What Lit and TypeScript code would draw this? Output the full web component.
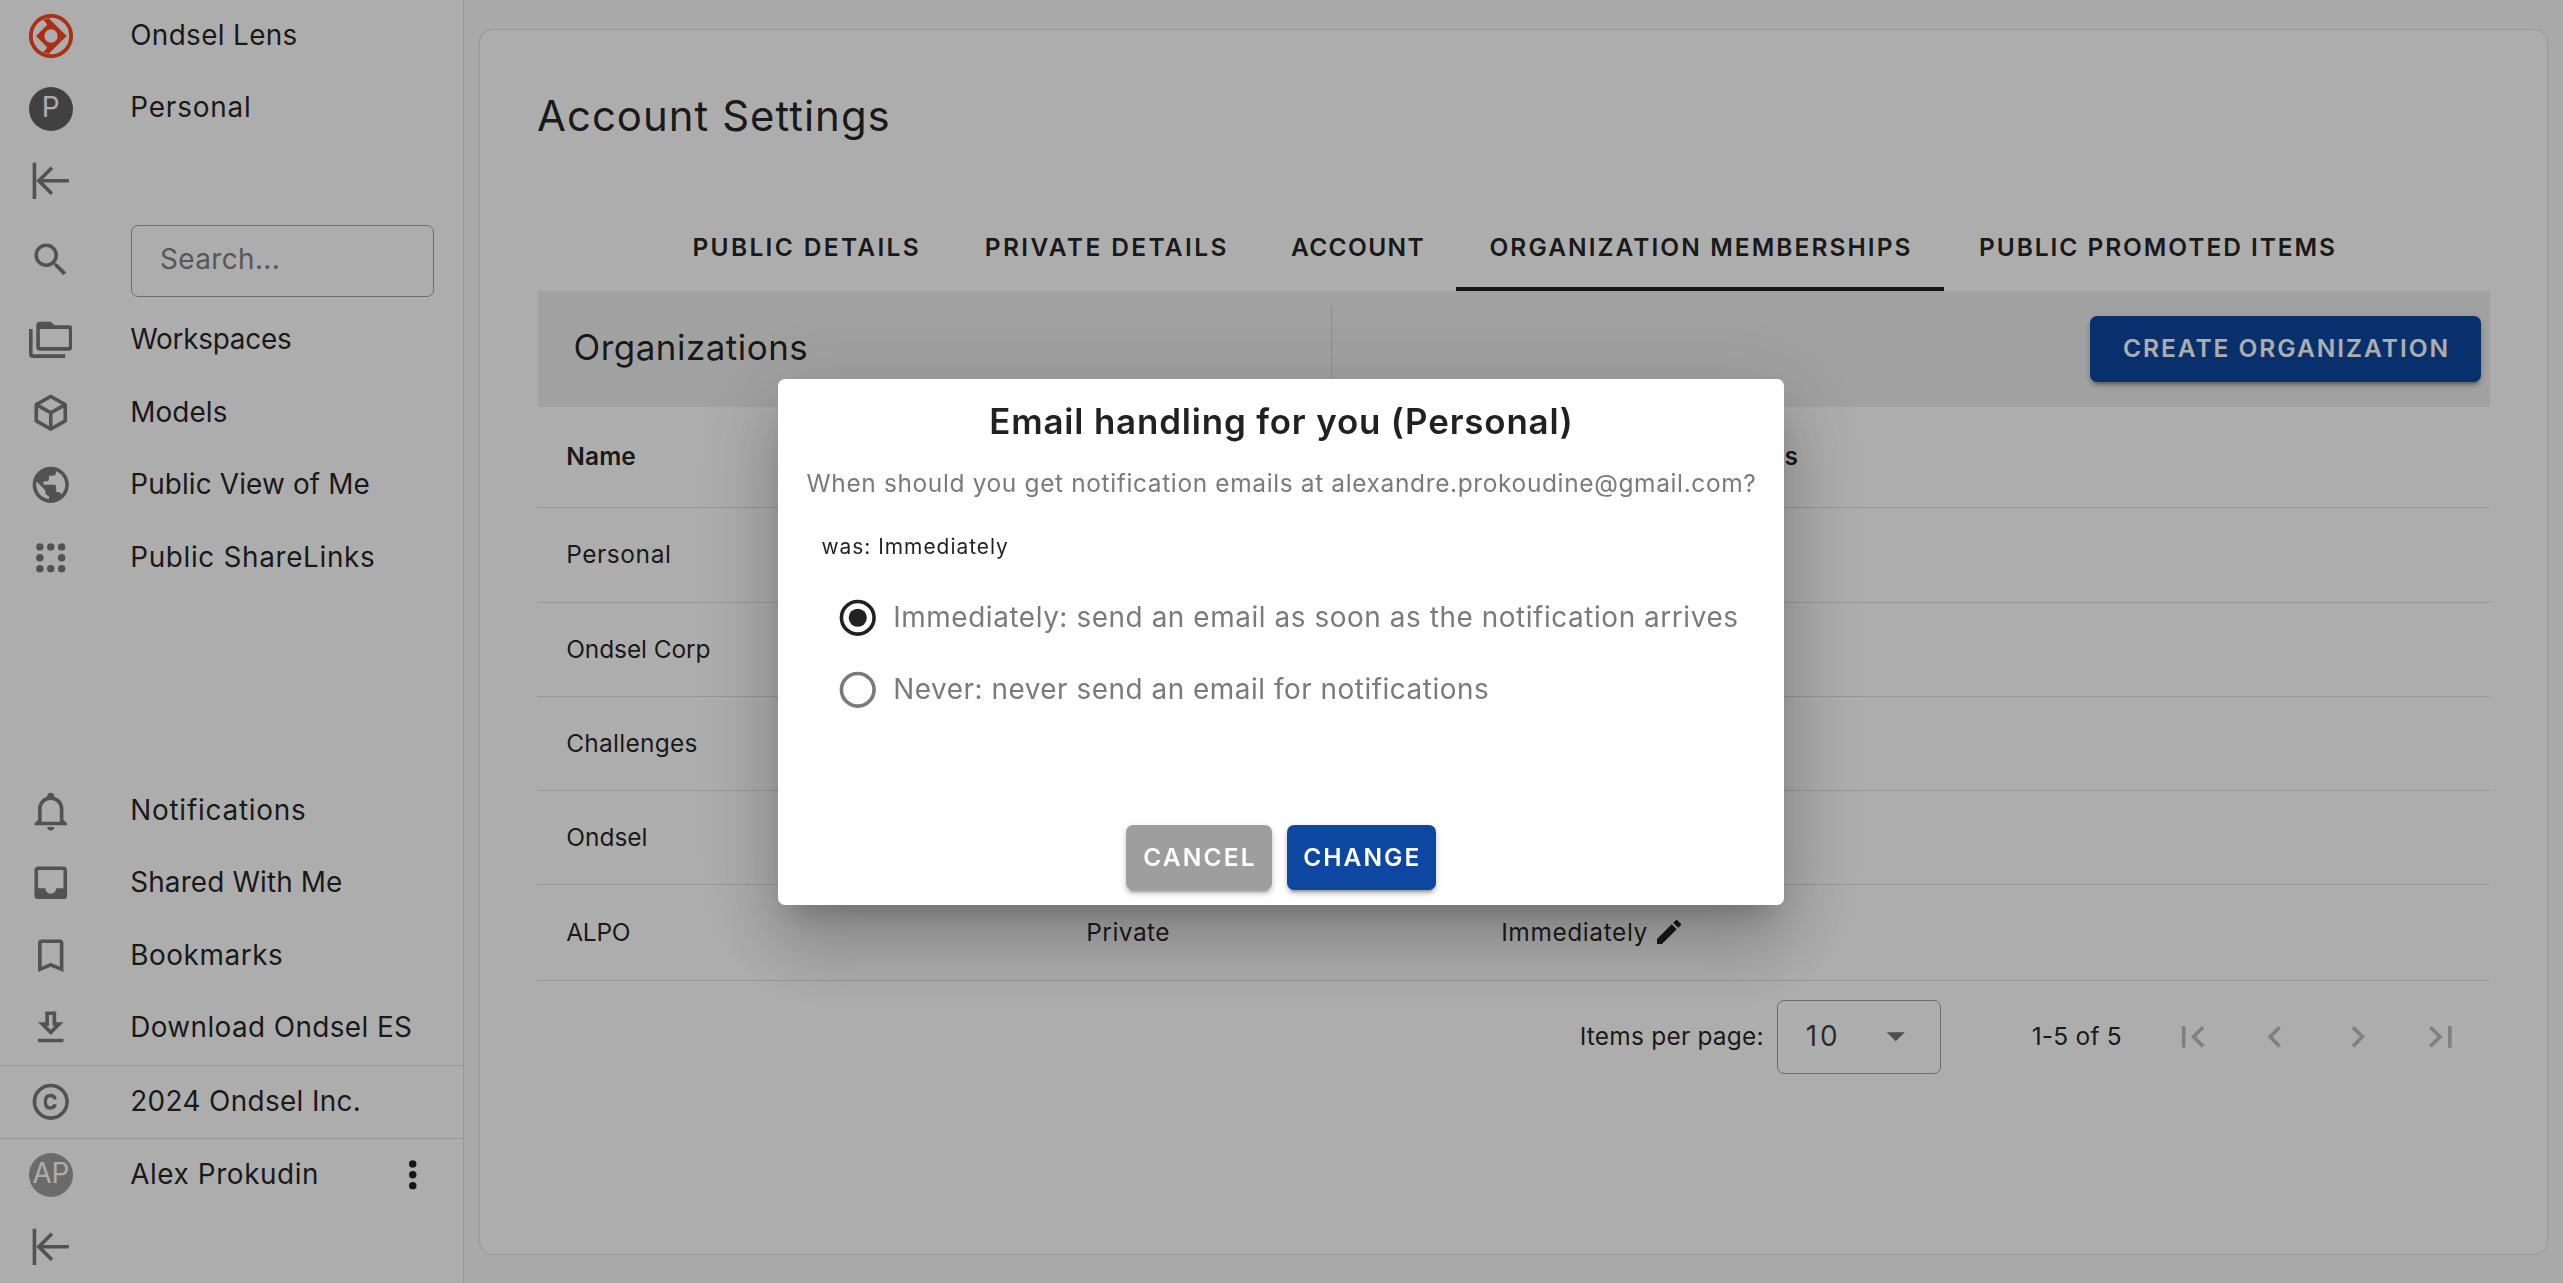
import { LitElement, html, css, svg, nothing } from "lit";
import { classMap } from "lit/directives/class-map.js";

const ICONS: Record<string, unknown> = {
  collapse: svg`<path d="M11.92,19.92L4,12L11.92,4.08L13.33,5.5L7.83,11H22V13H7.83L13.34,18.5L11.92,19.92M4,12V2H2V22H4V12Z"/>`,
  search: svg`<path d="M9.5,3A6.5,6.5 0 0,1 16,9.5C16,11.11 15.41,12.59 14.44,13.73L14.71,14H15.5L20.5,19L19,20.5L14,15.5V14.71L13.73,14.44C12.59,15.41 11.11,16 9.5,16A6.5,6.5 0 0,1 3,9.5A6.5,6.5 0 0,1 9.5,3M9.5,5C7,5 5,7 5,9.5C5,12 7,14 9.5,14C12,14 14,12 14,9.5C14,7 12,5 9.5,5Z"/>`,
  folders: svg`<path d="M22,4A2,2 0 0,1 24,6V16A2,2 0 0,1 22,18H6A2,2 0 0,1 4,16V4A2,2 0 0,1 6,2H12L14,4H22M2,6V20H20V22H2A2,2 0 0,1 0,20V6H2M6,6V16H22V6H6Z"/>`,
  cube: svg`<path d="M21,16.5C21,16.88 20.79,17.21 20.47,17.38L12.57,21.82C12.41,21.94 12.21,22 12,22C11.79,22 11.59,21.94 11.43,21.82L3.53,17.38C3.21,17.21 3,16.88 3,16.5V7.5C3,7.12 3.21,6.79 3.53,6.62L11.43,2.18C11.59,2.06 11.79,2 12,2C12.21,2 12.41,2.06 12.57,2.18L20.47,6.62C20.79,6.79 21,7.12 21,7.5V16.5M12,4.15L6.04,7.5L12,10.85L17.96,7.5L12,4.15M5,15.91L11,19.29V12.58L5,9.21V15.91M19,15.91V9.21L13,12.58V19.29L19,15.91Z"/>`,
  earth: svg`<path d="M17.9,17.39C17.64,16.59 16.89,16 16,16H15V13A1,1 0 0,0 14,12H8V10H10A1,1 0 0,0 11,9V7H13A2,2 0 0,0 15,5V4.59C17.93,5.77 20,8.64 20,12C20,14.08 19.2,15.97 17.9,17.39M11,19.93C7.05,19.44 4,16.08 4,12C4,11.38 4.08,10.78 4.21,10.21L9,15V16A2,2 0 0,0 11,18M12,2A10,10 0 0,0 2,12A10,10 0 0,0 12,22A10,10 0 0,0 22,12A10,10 0 0,0 12,2Z"/>`,
  dotsSquare: [[6, 6], [12, 6], [18, 6], [6, 12], [18, 12], [6, 18], [12, 18], [18, 18]].map(
    ([x, y]) => svg`<circle cx=${x} cy=${y} r="2.05"/>`,
  ),
  bell: svg`<path d="M10 21H14C14 22.1 13.1 23 12 23S10 22.1 10 21M21 19V20H3V19L5 17V11C5 7.9 7 5.2 10 4.3V4C10 2.9 10.9 2 12 2S14 2.9 14 4V4.3C17 5.2 19 7.9 19 11V17L21 19M17 11C17 8.2 14.8 6 12 6S7 8.2 7 11V18H17V11Z"/>`,
  inbox: svg`<path d="M19,3H5C3.9,3 3,3.9 3,5V19A2,2 0 0,0 5,21H19A2,2 0 0,0 21,19V5C21,3.9 20.1,3 19,3M19,15H15C15,16.66 13.65,18 12,18C10.35,18 9,16.66 9,15H5V5H19V15Z"/>`,
  bookmark: svg`<path d="M17,18L12,15.82L7,18V5H17M17,3H7A2,2 0 0,0 5,5V21L12,18L19,21V5C19,3.89 18.1,3 17,3Z"/>`,
  download: svg`<path d="M13,5V11H14.17L12,13.17L9.83,11H11V5H13M15,3H9V9H5L12,16L19,9H15V3M19,18H5V20H19V18Z"/>`,
  copyright: svg`<circle cx="12" cy="12" r="9" fill="none" stroke="currentColor" stroke-width="2"/><path d="M14.4,10.7C14.2,9.3 13.2,8.55 11.85,8.55C10,8.55 9,9.9 9,12C9,14.1 10,15.45 11.85,15.45C13.2,15.45 14.2,14.7 14.4,13.4" fill="none" stroke="currentColor" stroke-width="1.85"/>`,
  dotsVertical: svg`<circle cx="12" cy="6" r="2.05"/><circle cx="12" cy="12" r="2.05"/><circle cx="12" cy="18" r="2.05"/>`,
  pencil: svg`<path d="M20.71,7.04C21.1,6.65 21.1,6 20.71,5.63L18.37,3.29C18,2.9 17.35,2.9 16.96,3.29L15.12,5.12L18.87,8.87M3,17.25V21H6.75L17.81,9.93L14.06,6.18L3,17.25Z"/>`,
  menuDown: svg`<path d="M7,10L12,15L17,10H7Z"/>`,
  first: svg`<path d="M18.41,16.59L13.82,12L18.41,7.41L17,6L11,12L17,18L18.41,16.59M6,6H8V18H6V6Z"/>`,
  prev: svg`<path d="M15.41,16.58L10.83,12L15.41,7.41L14,6L8,12L14,18L15.41,16.58Z"/>`,
  next: svg`<path d="M8.59,16.58L13.17,12L8.59,7.41L10,6L16,12L10,18L8.59,16.58Z"/>`,
  last: svg`<path d="M5.59,7.41L10.18,12L5.59,16.59L7,18L13,12L7,6L5.59,7.41M16,6H18V18H16V6Z"/>`,
  radioOn: svg`<circle cx="12" cy="12" r="9" fill="none" stroke="currentColor" stroke-width="2"/><circle cx="12" cy="12" r="5"/>`,
  radioOff: svg`<circle cx="12" cy="12" r="9" fill="none" stroke="currentColor" stroke-width="2"/>`,
};

class UiIcon extends LitElement {
  static properties = { name: { type: String } };
  declare name: string;
  static styles = css`
    :host { display: block; flex: none; width: 43.5px; height: 43.5px; }
    svg { display: block; width: 100%; height: 100%; fill: currentColor; }
  `;
  render() {
    return html`<svg viewBox="0 0 24 24">${ICONS[this.name]}</svg>`;
  }
}
customElements.define("ui-icon", UiIcon);

/** A label together with its tracking, in em. */
type Label = [text: string, tracking: number];
const label = ([text, tracking]: Label) =>
  html`<span style="letter-spacing:${tracking}em">${text}</span>`;

class SideBar extends LitElement {
  static styles = css`
    :host {
      display: flex; flex-direction: column; box-sizing: border-box;
      width: 464px; height: 1283px; background: #fff;
      border-right: 1px solid rgba(0, 0, 0, 0.12);
      font-size: 27.9px; color: rgba(0, 0, 0, 0.87);
    }
    .row { display: flex; align-items: center; height: 72.5px; flex: none; white-space: nowrap; }
    .bottom .fixed { height: 72px; }
    .lead { width: 101.4px; margin-right: 28.8px; display: flex; justify-content: center; color: #7a7a7a; flex: none; }
    .glyph { padding-bottom: 1.5px; }
    .text { padding-bottom: 3px; line-height: 40px; flex: 1; }
    .logo { width: 44px; height: 44px; display: block; }
    .avatar {
      width: 44px; height: 44px; border-radius: 50%; background: #616161; color: #fff;
      display: flex; align-items: center; justify-content: center;
    }
    .avatar span { line-height: 40px; padding-bottom: 4px; }
    .avatar.user { background: #9e9e9e; letter-spacing: -0.01em; }
    .search { height: 87px; }
    .search .lead { padding-bottom: 2px; }
    .field {
      box-sizing: border-box; width: 303.5px; height: 72.5px; margin-left: 0.5px;
      border: 1px solid rgba(0, 0, 0, 0.36); border-radius: 7px;
      padding: 0 0 4px 28.2px; display: flex; align-items: center; color: #828282;
    }
    .bottom { margin-top: auto; }
    .rule { height: 1px; background: rgba(0, 0, 0, 0.12); }
    .more { margin-right: 29px; color: rgba(0, 0, 0, 0.87); }
  `;
  item(icon: string, text: Label | null, fixed = false) {
    return html`<div class=${classMap({ row: true, fixed })}>
      <div class="lead glyph"><ui-icon name=${icon}></ui-icon></div>
      ${text ? html`<div class="text">${label(text)}</div>` : nothing}
    </div>`;
  }
  render() {
    return html`
      <div class="row">
        <div class="lead">
          <svg class="logo" viewBox="26 28 132 132">
            <circle cx="92" cy="94" r="60.5" fill="none" stroke="#fb4820" stroke-width="11.5"/>
            <path fill="#fb4820" fill-rule="evenodd" d="M47,94L80,61Q79,54 67,46L86,40Q91,47 96,51L139,94L96,137Q91,141 86,148L67,142Q79,134 80,127ZM112,94A20,20 0 1,0 72,94A20,20 0 1,0 112,94Z"/>
          </svg>
        </div>
        <div class="text">${label(["Ondsel Lens", 0.0123])}</div>
      </div>
      <div class="row">
        <div class="lead"><div class="avatar"><span>P</span></div></div>
        <div class="text">${label(["Personal", 0.0303])}</div>
      </div>
      ${this.item("collapse", null)}
      <div class="row search">
        <div class="lead"><ui-icon name="search"></ui-icon></div>
        <div class="field">${label(["Search...", 0.0149])}</div>
      </div>
      ${this.item("folders", ["Workspaces", -0.0085])}
      ${this.item("cube", ["Models", 0.0032])}
      ${this.item("earth", ["Public View of Me", 0.0049])}
      ${this.item("dotsSquare", ["Public ShareLinks", 0.0236])}
      <div class="bottom">
        ${this.item("bell", ["Notifications", 0.0277])}
        ${this.item("inbox", ["Shared With Me", 0.0048])}
        ${this.item("bookmark", ["Bookmarks", 0.0205])}
        ${this.item("download", ["Download Ondsel ES", 0.014])}
        <div class="rule"></div>
        ${this.item("copyright", ["2024 Ondsel Inc.", 0.0125], true)}
        <div class="rule"></div>
        <div class="row fixed">
          <div class="lead"><div class="avatar user"><span>AP</span></div></div>
          <div class="text">${label(["Alex Prokudin", 0.0209])}</div>
          <ui-icon class="more" name="dotsVertical"></ui-icon>
        </div>
        ${this.item("collapse", null, true)}
      </div>
    `;
  }
}
customElements.define("side-bar", SideBar);

const TABS: { text: Label; width: number; active?: boolean }[] = [
  { text: ["PUBLIC DETAILS", 0.096], width: 293.5 },
  { text: ["PRIVATE DETAILS", 0.097], width: 306.5 },
  { text: ["ACCOUNT", 0.054], width: 196 },
  { text: ["ORGANIZATION MEMBERSHIPS", 0.084], width: 488, active: true },
  { text: ["PUBLIC PROMOTED ITEMS", 0.079], width: 428 },
];

interface Organization { name: Label; height: number; type?: Label; emails?: Label }
const ROWS: Organization[] = [
  { name: ["Personal", 0.0226], height: 95 },
  { name: ["Ondsel Corp", -0.0045], height: 94 },
  { name: ["Challenges", 0.0101], height: 94 },
  { name: ["Ondsel", 0], height: 94 },
  { name: ["ALPO", -0.01], height: 96, type: ["Private", 0.0191], emails: ["Immediately", 0.0234] },
];

class AccountSettings extends LitElement {
  static styles = css`
    :host { display: block; flex: 1; min-width: 0; box-sizing: border-box; height: 1283px; padding: 29px 15px 28px 15px; background: #f9f9f9; }
    .card {
      box-sizing: border-box; height: 1226px; border: 1px solid rgba(0, 0, 0, 0.12); border-radius: 14px;
      background: #fff; padding: 57px 57px 0 58px; color: rgba(0, 0, 0, 0.87); font-size: 24.5px; white-space: nowrap;
    }
    .title { font-size: 41.9px; line-height: 58px; font-weight: 400; margin: 0 0 59px -1px; }
    .tabs { display: flex; padding-left: 122px; height: 87px; font-weight: 600; }
    .tab { box-sizing: border-box; display: flex; align-items: center; justify-content: center; flex: none; padding-bottom: 2px; }
    .active { box-shadow: inset 0 -4px 0 #212121; padding-left: 2px; }
    .toolbar { height: 116px; background: #eee; display: flex; align-items: center; padding: 0 9px 0 35.5px; }
    .toolbar h2 { font-size: 34.9px; font-weight: 400; margin: 0; line-height: 50px; padding-bottom: 4px; width: 757.5px; }
    .vr { width: 1px; height: 88px; background: rgba(0, 0, 0, 0.12); margin-right: auto; }
    .create {
      width: 391px; height: 66px; border-radius: 7px; background: #0d47a1; color: #fff; font-weight: 600;
      display: flex; align-items: center; justify-content: center; padding: 0 0 3px 2px; box-sizing: border-box;
      box-shadow: 0 5px 2px -3px rgba(0,0,0,.2), 0 4px 4px 0 rgba(0,0,0,.14), 0 2px 9px 0 rgba(0,0,0,.12);
    }
    .line {
      display: grid; grid-template-columns: 520px 415px 1fr; box-sizing: border-box; align-items: center;
      padding: 0 0 2px 28.2px; border-bottom: 1px solid rgba(0, 0, 0, 0.12);
    }
    .head { height: 101px; font-weight: 600; }
    .emails { grid-column: 3; display: flex; align-items: center; }
    .pencil { width: 32px; height: 32px; margin-left: 5px; }
    .pager { display: flex; align-items: center; justify-content: flex-end; padding: 19px 8.4px 0 0; height: 73.5px; }
    .select {
      box-sizing: border-box; width: 164px; height: 73.5px; margin: 0 90px 0 13px;
      border: 1px solid rgba(0, 0, 0, 0.38); border-radius: 7px; font-size: 27.9px;
      display: flex; align-items: center; justify-content: space-between; padding: 0 22px 2px 28px; color: rgba(0, 0, 0, 0.76);
    }
    .caret { color: #757575; }
    .range { width: 119.6px; padding-left: 0.8px; }
    .pager > span, .range { padding-bottom: 1px; }
    .nav { width: 82.6px; display: flex; justify-content: center; color: #bdbdbd; padding-bottom: 1px; }
  `;
  render() {
    return html`<div class="card">
      <h1 class="title">${label(["Account Settings", 0.0246])}</h1>
      <div class="tabs">
        ${TABS.map((t) => html`<div class=${classMap({ tab: true, active: !!t.active })} style="width:${t.width}px">${label(t.text)}</div>`)}
      </div>
      <div class="toolbar">
        <h2>${label(["Organizations", 0.0149])}</h2>
        <div class="vr"></div>
        <div class="create">${label(["CREATE ORGANIZATION", 0.081])}</div>
      </div>
      <div class="line head">
        ${label(["Name", 0.0056])}
        <div class="emails">${label(["Your Notification Emails", 0.0255])}</div>
      </div>
      ${ROWS.map((r) => html`<div class="line" style="height:${r.height}px">
        ${label(r.name)}
        ${r.type ? label(r.type) : nothing}
        ${r.emails ? html`<div class="emails">${label(r.emails)}<ui-icon class="pencil" name="pencil"></ui-icon></div>` : nothing}
      </div>`)}
      <div class="pager">
        ${label(["Items per page:", 0.0086])}
        <div class="select">${label(["10", 0.1])}<ui-icon class="caret" name="menuDown"></ui-icon></div>
        <div class="range">${label(["1-5 of 5", 0.0089])}</div>
        ${["first", "prev", "next", "last"].map((n) => html`<div class="nav"><ui-icon name=${n}></ui-icon></div>`)}
      </div>
    </div>`;
  }
}
customElements.define("account-settings", AccountSettings);

class EmailDialog extends LitElement {
  static styles = css`
    :host {
      position: fixed; inset: 0; padding: 1px 1px 0 0; display: flex; align-items: center; justify-content: center;
      background: rgba(0, 0, 0, 0.32);
    }
    .dialog {
      box-sizing: border-box; width: 1006px; height: 526px; background: #fff; border-radius: 7px; padding-top: 12.5px;
      display: flex; flex-direction: column; color: rgba(0, 0, 0, 0.87); font-size: 24.5px; white-space: nowrap;
      box-shadow: 0 20px 27px -13px rgba(0,0,0,.2), 0 43px 69px 5px rgba(0,0,0,.14), 0 16px 83px 14px rgba(0,0,0,.12);
    }
    .title { margin: 0 0 8.5px 1px; font-size: 34.9px; font-weight: 600; line-height: 58px; text-align: center; }
    .sub { line-height: 50px; text-align: center; color: #7a7a7a; padding-left: 1px; }
    .was { font-size: 20.9px; line-height: 36px; margin: 21px 0 17px 43.5px; }
    .option { display: flex; align-items: center; height: 72px; padding-left: 57.5px; font-size: 27.9px; color: #7a7a7a; }
    .option span { margin-left: 14.3px; line-height: 40px; padding-bottom: 2px; }
    .on { color: #212121; }
    .actions { display: flex; justify-content: center; gap: 14.5px; margin: auto 0 15px; font-weight: 600; }
    .btn {
      box-sizing: border-box; width: 146px; height: 65px; border-radius: 7px; background: #9e9e9e; color: #fff;
      display: flex; align-items: center; justify-content: center; padding: 0 0 2px 2px;
      box-shadow: 0 5px 2px -3px rgba(0,0,0,.2), 0 4px 4px 0 rgba(0,0,0,.14), 0 2px 9px 0 rgba(0,0,0,.12);
    }
    .primary { width: 149.5px; background: #0d47a1; }
  `;
  render() {
    return html`<div class="dialog">
      <h3 class="title">${label(["Email handling for you (Personal)", 0.024])}</h3>
      <div class="sub">${label(["When should you get notification emails at alexandre.prokoudine@gmail.com?", 0.0252])}</div>
      <div class="was">${label(["was: Immediately", 0.0476])}</div>
      <div class="option"><ui-icon class="on" name="radioOn"></ui-icon>${label(["Immediately: send an email as soon as the notification arrives", 0.0205])}</div>
      <div class="option"><ui-icon name="radioOff"></ui-icon>${label(["Never: never send an email for notifications", 0.0187])}</div>
      <div class="actions">
        <div class="btn">${label(["CANCEL", 0.089])}</div>
        <div class="btn primary">${label(["CHANGE", 0.082])}</div>
      </div>
    </div>`;
  }
}
customElements.define("email-dialog", EmailDialog);

class AppRoot extends LitElement {
  static styles = css`
    :host { display: block; font-family: Inter, Roboto, sans-serif; }
    .app { display: flex; height: 1283px; overflow: hidden; }
  `;
  render() {
    return html`<div class="app"><side-bar></side-bar><account-settings></account-settings></div>
      <email-dialog></email-dialog>`;
  }
}
customElements.define("app-root", AppRoot);
